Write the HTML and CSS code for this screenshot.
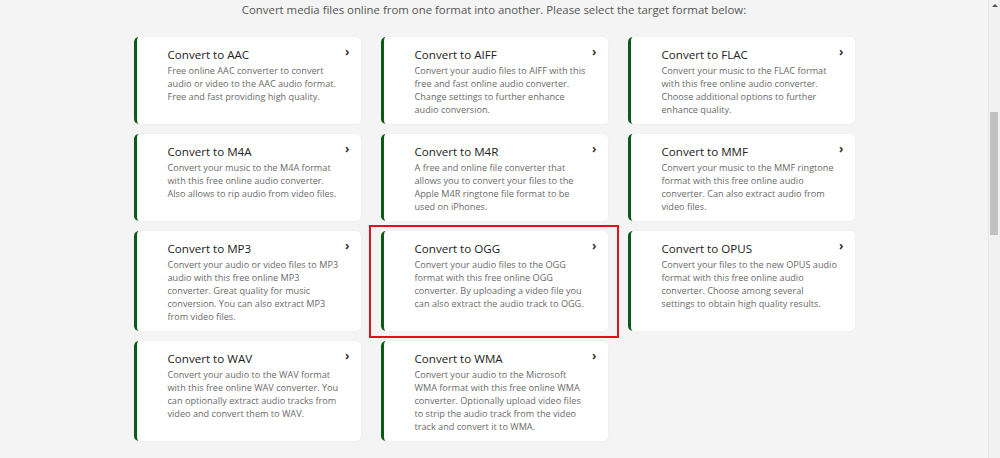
FILE: index.html
```html
<!DOCTYPE html>
<html lang="en">
<head>
<meta charset="UTF-8">
<meta name="viewport" content="width=device-width, initial-scale=1.0">
<title>Audio Converter</title>
<link rel="stylesheet" href="styles.css">
</head>
<body>
<div class="page">
    <main class="content">
        <p class="intro">Convert media files online from one format into another. Please select the target format below:</p>
        <div class="grid">
            <a class="card" href="#">
                <div class="card__head"><h3>Convert to AAC</h3><span class="chev">&#8250;</span></div>
                <p>Free online AAC converter to convert audio or video to the AAC audio format. Free and fast providing high quality.</p>
            </a>
            <a class="card" href="#">
                <div class="card__head"><h3>Convert to AIFF</h3><span class="chev">&#8250;</span></div>
                <p>Convert your audio files to AIFF with this free and fast online audio converter. Change settings to further enhance audio conversion.</p>
            </a>
            <a class="card" href="#">
                <div class="card__head"><h3>Convert to FLAC</h3><span class="chev">&#8250;</span></div>
                <p>Convert your music to the FLAC format with this free online audio converter. Choose additional options to further enhance quality.</p>
            </a>
            <a class="card" href="#">
                <div class="card__head"><h3>Convert to M4A</h3><span class="chev">&#8250;</span></div>
                <p>Convert your music to the M4A format with this free online audio converter. Also allows to rip audio from video files.</p>
            </a>
            <a class="card" href="#">
                <div class="card__head"><h3>Convert to M4R</h3><span class="chev">&#8250;</span></div>
                <p>A free and online file converter that allows you to convert your files to the Apple M4R ringtone file format to be used on iPhones.</p>
            </a>
            <a class="card" href="#">
                <div class="card__head"><h3>Convert to MMF</h3><span class="chev">&#8250;</span></div>
                <p>Convert your music to the MMF ringtone format with this free online audio converter. Can also extract audio from video files.</p>
            </a>
            <a class="card" href="#">
                <div class="card__head"><h3>Convert to MP3</h3><span class="chev">&#8250;</span></div>
                <p>Convert your audio or video files to MP3 audio with this free online MP3 converter. Great quality for music conversion. You can also extract MP3 from video files.</p>
            </a>
            <a class="card card--marked" href="#">
                <div class="card__head"><h3>Convert to OGG</h3><span class="chev">&#8250;</span></div>
                <p>Convert your audio files to the OGG format with this free online OGG converter. By uploading a video file you can also extract the audio track to OGG.</p>
            </a>
            <a class="card" href="#">
                <div class="card__head"><h3>Convert to OPUS</h3><span class="chev">&#8250;</span></div>
                <p>Convert your files to the new OPUS audio format with this free online audio converter. Choose among several settings to obtain high quality results.</p>
            </a>
            <a class="card" href="#">
                <div class="card__head"><h3>Convert to WAV</h3><span class="chev">&#8250;</span></div>
                <p>Convert your audio to the WAV format with this free online WAV converter. You can optionally extract audio tracks from video and convert them to WAV.</p>
            </a>
            <a class="card" href="#">
                <div class="card__head"><h3>Convert to WMA</h3><span class="chev">&#8250;</span></div>
                <p>Convert your audio to the Microsoft WMA format with this free online WMA converter. Optionally upload video files to strip the audio track from the video track and convert it to WMA.</p>
            </a>
        </div>
    </main>
    <div class="scrollbar">
        <span class="scrollbar__arrow"></span>
        <span class="scrollbar__thumb"></span>
    </div>
</div>
</body>
</html>
```

FILE: styles.css
```css
html, body {
    margin: 0;
    padding: 0;
    height: 100%;
    overflow: hidden;
}
body {
    font-family: "Open Sans", Arial, sans-serif;
    background-color: #f4f4f4;
    color: #333;
}
.page {
    display: flex;
    height: 100%;
}
.content {
    flex: 1;
}
.intro {
    margin: 1px 0 18px;
    text-align: center;
    font-size: 11.4px;
    line-height: 18px;
    color: #555;
}
.grid {
    display: grid;
    grid-template-columns: repeat(3, 227px);
    gap: 10px 20px;
    justify-content: center;
}
.card {
    position: relative;
    display: block;
    background-color: #fff;
    border-left: 3px solid #0c5a17;
    border-radius: 5px;
    padding: 9px 11px 8px 31px;
    text-decoration: none;
    box-shadow: 0 0 2px rgba(0, 0, 0, 0.06);
}
.card__head {
    display: flex;
    justify-content: space-between;
    align-items: flex-start;
}
.card h3 {
    margin: 0;
    font-size: 11.6px;
    font-weight: 400;
    line-height: 18px;
    color: #222;
}
.chev {
    font-size: 12px;
    line-height: 12px;
    font-weight: 700;
    color: #333;
}
.card p {
    margin: 0;
    padding-right: 6px;
    font-size: 9.15px;
    line-height: 13px;
    color: #6a6a6a;
}
/* red selection frame around the picked card */
.card--marked::after {
    content: "";
    position: absolute;
    top: -6px;
    bottom: -7px;
    left: -15px;
    right: -11px;
    border: 2px solid #e3101b;
}
.scrollbar {
    position: relative;
    width: 11px;
    background-color: #f1f1f1;
    border-left: 1px solid #e8e8e8;
}
.scrollbar__arrow {
    position: absolute;
    top: 4px;
    left: 3px;
    border-left: 3px solid transparent;
    border-right: 3px solid transparent;
    border-bottom: 3px solid #505050;
}
.scrollbar__thumb {
    position: absolute;
    top: 112px;
    left: 1px;
    width: 8px;
    height: 123px;
    background-color: #c1c1c1;
}
```
